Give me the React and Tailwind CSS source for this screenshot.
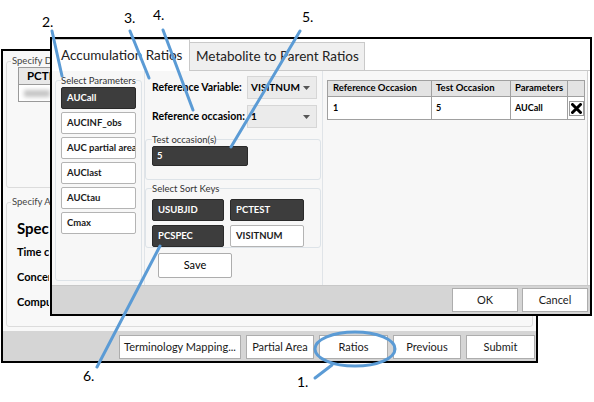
import React from "react";

function PButton({ children, dark }) {
  return (
    <div
      className={
        dark
          ? "h-[22px] flex items-center pl-[5px] rounded-[2px] border border-[#2a2a2a] bg-[#3d3d3d] text-white text-[9.5px] font-bold whitespace-nowrap overflow-hidden"
          : "h-[22px] flex items-center pl-[5px] rounded-[2px] border border-[#b4b4b4] bg-white text-[#1a1a1a] text-[9.5px] font-bold whitespace-nowrap overflow-hidden"
      }
    >
      {children}
    </div>
  );
}

function WinButton({ children, className }) {
  return (
    <div
      className={
        "h-[24px] flex items-center justify-center bg-white border border-[#adadad] text-[11px] text-[#1a1a1a] whitespace-nowrap " +
        className
      }
    >
      {children}
    </div>
  );
}

function Select({ value }) {
  return (
    <div className="w-[70px] h-[23px] bg-[#ebebeb] border border-[#d6d6d6] flex items-center justify-between pl-[3px] pr-[6px] text-[10px] font-bold">
      <span>{value}</span>
      <svg width="7" height="4" viewBox="0 0 7 4">
        <path d="M0 0h7L3.5 4z" fill="#555" />
      </svg>
    </div>
  );
}

function BackWindow() {
  return (
    <div className="absolute left-[1px] top-[49px] w-[537px] h-[314px] border-2 border-black bg-[#f8f8f8] flex flex-col">
      <div className="flex-1 flex flex-col gap-[8px] px-[3px] pt-[4px]">
        <fieldset className="h-[133px] border border-[#dcdcdc] rounded-[3px] pl-[4px]">
          <legend className="px-[1px] text-[9.5px] leading-[12px] text-[#444]">
            <span className="inline-block w-[38px] overflow-hidden whitespace-nowrap align-bottom">Specify Data</span>
          </legend>
          <div className="ml-[7px] w-[32px] overflow-hidden border-l border-y border-[#9a9a9a]">
            <div className="h-[17px] w-[120px] bg-[#e8e8e8] border-b border-[#9a9a9a] flex items-center pl-[8px] text-[11.5px] font-bold whitespace-nowrap">
              PCTE
            </div>
            <div className="h-[16px] bg-white flex items-center">
              <div className="ml-[5px] h-[7px] w-[40px] bg-[#c4c4c4] blur-[2px]" />
            </div>
          </div>
        </fieldset>
        <fieldset className="h-[131px] border border-[#dcdcdc] rounded-[3px] pl-[4px]">
          <legend className="px-[1px] text-[9.5px] leading-[12px] text-[#444]">
            <span className="inline-block w-[38px] overflow-hidden whitespace-nowrap align-bottom">Specify An</span>
          </legend>
          <div className="pl-[6px] pt-[8px] flex flex-col font-bold w-[38px] overflow-hidden whitespace-nowrap">
            <div className="h-[24px] flex items-center text-[15px]">Specify</div>
            <div className="h-[25px] flex items-center text-[11px]">Time col</div>
            <div className="h-[25px] flex items-center text-[11px]">Concentr</div>
            <div className="h-[25px] flex items-center text-[11px]">Compute</div>
          </div>
        </fieldset>
      </div>
      <div className="h-[30px] bg-[#d5d5d5] flex items-start justify-end gap-[5px] pt-[4px] pr-[1px]">
        <WinButton className="w-[122px]">Terminology Mapping...</WinButton>
        <WinButton className="w-[68px]">Partial Area</WinButton>
        <WinButton className="w-[69px]">Ratios</WinButton>
        <WinButton className="w-[68px]">Previous</WinButton>
        <WinButton className="w-[69px]">Submit</WinButton>
      </div>
    </div>
  );
}

function FrontDialog() {
  const params = ["AUCall", "AUCINF_obs", "AUC partial area", "AUClast", "AUCtau", "Cmax"];
  return (
    <div className="absolute left-[50px] top-[37px] w-[542px] h-[279px] border-2 border-black bg-white flex flex-col">
      <div className="h-[32px] flex items-end">
        <div className="h-[32px] w-[138px] bg-white border-t border-r border-[#c9c9c9] flex items-center pl-[9px] text-[13.5px] text-[#222] whitespace-nowrap">
          Accumulation Ratios
        </div>
        <div className="h-[29px] w-[175px] bg-[#efefef] border-t border-r border-b border-[#c9c9c9] flex items-center pl-[6px] text-[13.5px] text-[#222] whitespace-nowrap overflow-hidden">
          Metabolite to Parent Ratios
        </div>
        <div className="flex-1 h-px bg-[#c9c9c9]" />
      </div>
      <div className="flex-1 flex bg-[#f7f7f7] mr-[2px] border-r border-[#d0d0d0]">
        <div className="w-[92px] pl-[3px] pt-[4px]">
          <fieldset className="h-[206px] w-[87px] border border-[#dde3e8] rounded-[3px] pl-[5px]">
            <legend className="text-[9.5px] leading-[11px] text-[#333]">Select Parameters</legend>
            <div className="flex flex-col gap-[3px] pt-[1px] w-[75px]">
              {params.map((p, i) => (
                <PButton key={p} dark={i === 0}>
                  {p}
                </PButton>
              ))}
            </div>
          </fieldset>
        </div>
        <div className="w-[179px] border-x border-[#e0e4e8] flex flex-col pt-[5px]">
          <div className="flex items-center h-[23px] pl-[7px]">
            <div className="w-[95px] text-[10.5px] font-bold whitespace-nowrap">Reference Variable:</div>
            <Select value="VISITNUM" />
          </div>
          <div className="flex items-center h-[23px] pl-[7px] mt-[6px]">
            <div className="w-[95px] text-[10.5px] font-bold whitespace-nowrap">Reference occasion:</div>
            <Select value="1" />
          </div>
          <fieldset className="mt-[6px] h-[46px] w-[176px] border border-[#dde3e8] rounded-[3px] pl-[6px]">
            <legend className="text-[9.5px] leading-[11px] text-[#333]">Test occasion(s)</legend>
            <div className="mt-[1px] h-[20px] w-[96px] bg-[#3d3d3d] border border-[#2a2a2a] rounded-[2px] text-white text-[9.5px] font-bold flex items-center pl-[4px]">
              5
            </div>
          </fieldset>
          <fieldset className="mt-[3px] h-[65px] w-[176px] border border-[#dde3e8] rounded-[3px] pl-[6px]">
            <legend className="text-[9.5px] leading-[11px] text-[#333]">Select Sort Keys</legend>
            <div className="grid grid-cols-[72px_74px] gap-x-[6px] gap-y-[4px] pt-[5px]">
              <PButton dark>USUBJID</PButton>
              <PButton dark>PCTEST</PButton>
              <PButton dark>PCSPEC</PButton>
              <PButton>VISITNUM</PButton>
            </div>
          </fieldset>
          <div className="mt-[5px] ml-[13px] w-[74px] h-[25px] bg-white border border-[#adadad] rounded-[2px] flex items-center justify-center text-[11px]">
            Save
          </div>
        </div>
        <div className="flex-1 pl-[4px] pt-[9px]">
          <div className="w-[258px] border border-[#a0a0a0] bg-white">
            <div className="grid grid-cols-[104px_79px_57px_1fr] h-[16px] bg-[#e3e3e3] border-b border-[#a0a0a0] text-[9.5px] font-bold">
              <div className="border-r border-[#a0a0a0] pl-[5px] flex items-center">Reference Occasion</div>
              <div className="border-r border-[#a0a0a0] pl-[4px] flex items-center">Test Occasion</div>
              <div className="border-r border-[#a0a0a0] pl-[4px] flex items-center">Parameters</div>
              <div />
            </div>
            <div className="grid grid-cols-[104px_79px_57px_1fr] h-[22px] text-[9px] font-bold">
              <div className="border-r border-[#a0a0a0] pl-[5px] flex items-center">1</div>
              <div className="border-r border-[#a0a0a0] pl-[4px] flex items-center">5</div>
              <div className="border-r border-[#a0a0a0] pl-[4px] flex items-center">AUCall</div>
              <div className="flex items-center justify-center">
                <div className="w-[15px] h-[15px] border border-[#9a9a9a] bg-white flex items-center justify-center">
                  <svg width="11" height="11" viewBox="0 0 11 11">
                    <path d="M1.5 1.5L9.5 9.5M9.5 1.5L1.5 9.5" stroke="#000" strokeWidth="3" strokeLinecap="round" />
                  </svg>
                </div>
              </div>
            </div>
          </div>
        </div>
      </div>
      <div className="h-[29px] bg-[#d5d5d5] flex items-center justify-end gap-[4px] pr-[2px] border-t border-[#c8c8c8]">
        <WinButton className="w-[66px]">OK</WinButton>
        <WinButton className="w-[66px]">Cancel</WinButton>
      </div>
    </div>
  );
}

function Annotations() {
  return (
    <>
      <svg className="absolute left-0 top-0 pointer-events-none" width="594" height="402" viewBox="0 0 594 402">
        <g stroke="#5b9bd5" strokeWidth="3" strokeLinecap="round" fill="none">
          <line x1="52" y1="31" x2="62" y2="76" />
          <line x1="130" y1="31" x2="149" y2="78" />
          <line x1="163" y1="30" x2="193" y2="110" />
          <line x1="300" y1="31" x2="231" y2="147" />
          <line x1="97" y1="367" x2="160" y2="246" />
          <line x1="315" y1="378" x2="332" y2="365" />
          <ellipse cx="355" cy="349" rx="40" ry="17" />
        </g>
      </svg>
      <div className="absolute left-[42px] top-[15px] text-[14px] leading-none">2.</div>
      <div className="absolute left-[124px] top-[11px] text-[14px] leading-none">3.</div>
      <div className="absolute left-[153px] top-[8px] text-[14px] leading-none">4.</div>
      <div className="absolute left-[302px] top-[10px] text-[14px] leading-none">5.</div>
      <div className="absolute left-[83px] top-[369px] text-[14px] leading-none">6.</div>
      <div className="absolute left-[297px] top-[375px] text-[14px] leading-none">1.</div>
    </>
  );
}

export default function App() {
  return (
    <div className="relative w-[594px] h-[402px] overflow-hidden bg-white text-black font-[family-name:Lato,sans-serif]">
      <BackWindow />
      <FrontDialog />
      <Annotations />
    </div>
  );
}
